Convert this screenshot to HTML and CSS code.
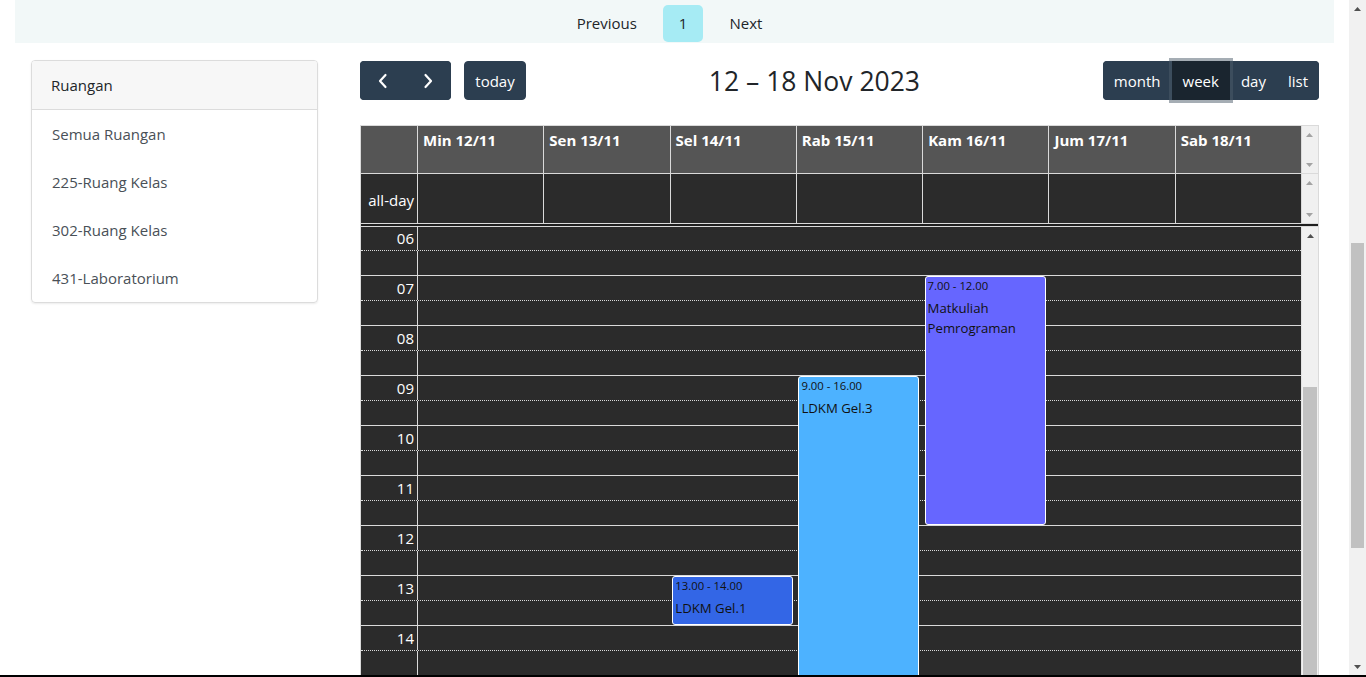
FILE: index.html
```html
<!DOCTYPE html>
<html lang="id">
<head>
<meta charset="utf-8">
<title>Jadwal Ruangan</title>
<link rel="stylesheet" href="styles.css">
</head>
<body>
<div class="screen">
  <div class="page">
    <div class="pager-bar">
      <nav class="pager">
        <a class="pg-link">Previous</a>
        <a class="pg-link active">1</a>
        <a class="pg-link">Next</a>
      </nav>
    </div>

    <div class="content">
      <aside class="side">
        <div class="card">
          <div class="card-head">Ruangan</div>
          <div class="list">
            <a class="item">Semua Ruangan</a>
            <a class="item">225-Ruang Kelas</a>
            <a class="item">302-Ruang Kelas</a>
            <a class="item">431-Laboratorium</a>
          </div>
        </div>
      </aside>

      <section class="cal-wrap">
        <div class="toolbar">
          <div class="tb-chunk">
            <div class="btn-group">
              <button class="btn btn-icon" aria-label="prev">
                <svg width="12" height="16" viewBox="0 0 12 16"><polyline points="8.5,2 3,8 8.5,14" fill="none" stroke="#fff" stroke-width="2.2" stroke-linecap="round" stroke-linejoin="round"/></svg>
              </button>
              <button class="btn btn-icon" aria-label="next">
                <svg width="12" height="16" viewBox="0 0 12 16"><polyline points="3.5,2 9,8 3.5,14" fill="none" stroke="#fff" stroke-width="2.2" stroke-linecap="round" stroke-linejoin="round"/></svg>
              </button>
            </div>
            <button class="btn btn-today">today</button>
          </div>
          <h2 class="tb-title">12 – 18 Nov 2023</h2>
          <div class="btn-group">
            <button class="btn">month</button>
            <button class="btn active">week</button>
            <button class="btn">day</button>
            <button class="btn">list</button>
          </div>
        </div>

        <div class="cal">
          <div class="row-head">
            <div class="hc hc-axis"></div>
            <div class="hc">Min 12/11</div>
            <div class="hc">Sen 13/11</div>
            <div class="hc">Sel 14/11</div>
            <div class="hc">Rab 15/11</div>
            <div class="hc">Kam 16/11</div>
            <div class="hc">Jum 17/11</div>
            <div class="hc">Sab 18/11</div>
            <div class="sb-cell">
              <span class="arr"><svg width="7" height="4" viewBox="0 0 7 4"><polygon points="0,4 3.5,0 7,4" fill="#a3a3a3"/></svg></span>
              <span class="arr"><svg width="7" height="4" viewBox="0 0 7 4"><polygon points="0,0 7,0 3.5,4" fill="#a3a3a3"/></svg></span>
            </div>
          </div>

          <div class="row-allday">
            <div class="ad-axis">all-day</div>
            <div class="ad"></div>
            <div class="ad"></div>
            <div class="ad"></div>
            <div class="ad"></div>
            <div class="ad"></div>
            <div class="ad"></div>
            <div class="ad"></div>
            <div class="sb-cell">
              <span class="arr"><svg width="7" height="4" viewBox="0 0 7 4"><polygon points="0,4 3.5,0 7,4" fill="#a3a3a3"/></svg></span>
              <span class="arr"><svg width="7" height="4" viewBox="0 0 7 4"><polygon points="0,0 7,0 3.5,4" fill="#a3a3a3"/></svg></span>
            </div>
          </div>

          <div class="divider"></div>

          <div class="tg">
            <div class="tg-main">
              <div class="slots">
                <div class="slot hour"><div class="slot-label">06</div><div></div></div>
                <div class="slot half"><div class="slot-label"></div><div></div></div>
                <div class="slot hour"><div class="slot-label">07</div><div></div></div>
                <div class="slot half"><div class="slot-label"></div><div></div></div>
                <div class="slot hour"><div class="slot-label">08</div><div></div></div>
                <div class="slot half"><div class="slot-label"></div><div></div></div>
                <div class="slot hour"><div class="slot-label">09</div><div></div></div>
                <div class="slot half"><div class="slot-label"></div><div></div></div>
                <div class="slot hour"><div class="slot-label">10</div><div></div></div>
                <div class="slot half"><div class="slot-label"></div><div></div></div>
                <div class="slot hour"><div class="slot-label">11</div><div></div></div>
                <div class="slot half"><div class="slot-label"></div><div></div></div>
                <div class="slot hour"><div class="slot-label">12</div><div></div></div>
                <div class="slot half"><div class="slot-label"></div><div></div></div>
                <div class="slot hour"><div class="slot-label">13</div><div></div></div>
                <div class="slot half"><div class="slot-label"></div><div></div></div>
                <div class="slot hour"><div class="slot-label">14</div><div></div></div>
                <div class="slot half"><div class="slot-label"></div><div></div></div>
              </div>
              <div class="tg-cols">
                <div></div>
                <div class="tg-col"></div>
                <div class="tg-col"></div>
                <div class="tg-col">
                  <div class="ev ev-c" style="top:349px;height:49px">
                    <div class="ev-time">13.00 - 14.00</div>
                    <div class="ev-title">LDKM Gel.1</div>
                  </div>
                </div>
                <div class="tg-col">
                  <div class="ev ev-b" style="top:149px;height:349px">
                    <div class="ev-time">9.00 - 16.00</div>
                    <div class="ev-title">LDKM Gel.3</div>
                  </div>
                </div>
                <div class="tg-col">
                  <div class="ev ev-a" style="top:49px;height:249px">
                    <div class="ev-time">7.00 - 12.00</div>
                    <div class="ev-title">Matkuliah Pemrograman</div>
                  </div>
                </div>
                <div class="tg-col"></div>
                <div class="tg-col"></div>
              </div>
            </div>
            <div class="tg-scroll">
              <span class="arr"><svg width="7" height="4" viewBox="0 0 7 4"><polygon points="0,4 3.5,0 7,4" fill="#505050"/></svg></span>
              <div class="tg-thumb"></div>
            </div>
          </div>
        </div>
      </section>
    </div>
  </div>

  <div class="vscroll">
    <span class="arr"><svg width="7" height="4" viewBox="0 0 7 4"><polygon points="0,4 3.5,0 7,4" fill="#505050"/></svg></span>
    <div class="vtrack"><div class="vthumb"></div></div>
    <span class="arr"><svg width="7" height="4" viewBox="0 0 7 4"><polygon points="0,0 7,0 3.5,4" fill="#505050"/></svg></span>
  </div>
</div>
<div class="bottom-line"></div>
</body>
</html>
```

FILE: styles.css
```css
* { box-sizing: border-box; }

html, body {
  margin: 0;
  padding: 0;
}

body {
  width: 1366px;
  height: 677px;
  overflow: hidden;
  background: #fff;
  color: #212529;
  font-family: "Open Sans", "Noto Sans", "Liberation Sans", sans-serif;
  font-size: 15px;
  line-height: 24px;
}

.screen {
  display: flex;
  height: 675px;
}

.page {
  width: 1349px;
  height: 675px;
  overflow: hidden;
}

.bottom-line {
  height: 2px;
  background: #000;
}

/* pagination strip */
.pager-bar {
  margin: 0 15px;
  height: 43px;
  background: #f2f8f8;
  display: flex;
  justify-content: center;
  align-items: flex-start;
  padding: 5px 10px 0 0;
}

.pager {
  display: flex;
  gap: 13px;
}

.pg-link {
  display: block;
  padding: 6px 13px;
  line-height: 25px;
  border-radius: 5px;
  color: #212529;
}

.pg-link.active {
  padding: 6px 16px;
  background: #a6ebf4;
}

/* layout */
.content {
  display: flex;
  align-items: flex-start;
  gap: 42px;
  padding: 17px 0 0 31px;
}

/* sidebar card */
.card {
  width: 287px;
  border: 1px solid #dcdcdc;
  border-radius: 4px;
  box-shadow: 0 1px 2px rgba(0, 0, 0, 0.08);
  overflow: hidden;
}

.card-head {
  height: 49px;
  padding: 12px 19px;
  background: #f7f7f7;
  border-bottom: 1px solid #dcdcdc;
  color: #212529;
}

.list {
  display: flex;
  flex-direction: column;
}

.item {
  display: block;
  height: 48px;
  padding: 12px 20px;
  color: #495057;
}

/* calendar */
.cal-wrap {
  width: 959px;
  padding-top: 1px;
}

.toolbar {
  display: flex;
  justify-content: space-between;
  align-items: center;
  height: 39px;
  margin-bottom: 25px;
}

.tb-chunk {
  display: flex;
  align-items: center;
  gap: 13px;
}

.btn-group {
  display: flex;
  background: #2c3e50;
  border-radius: 4px;
}

.btn {
  display: flex;
  align-items: center;
  justify-content: center;
  height: 39px;
  padding: 0 10px;
  border: 1px solid #2c3e50;
  background: #2c3e50;
  color: #fff;
  font-family: inherit;
  font-size: 15px;
  line-height: 24px;
  border-radius: 4px;
}

.btn-group .btn {
  border-radius: 0;
}

.btn-group .btn:first-child {
  border-radius: 4px 0 0 4px;
}

.btn-group .btn:last-child {
  border-radius: 0 4px 4px 0;
}

.btn-icon {
  width: 45.5px;
  padding: 0;
}

.btn-today {
  width: 62px;
  padding: 0;
}

.btn.active {
  background: #1a252f;
  border-color: #1a252f;
  box-shadow: 0 0 0 3px rgba(76, 91, 106, 0.5);
  position: relative;
  z-index: 1;
}

.tb-title {
  margin: 0;
  font-size: 26.5px;
  font-weight: 500;
  line-height: 34px;
  color: #212529;
}

.cal {
  border: 1px solid #dadada;
  background: #2b2b2b;
}

.row-head,
.row-allday {
  display: grid;
  grid-template-columns: 56px repeat(7, 1fr) 17px;
  border-bottom: 1px solid #dadada;
}

.row-head {
  height: 48px;
  background: #555;
}

.row-allday {
  height: 50px;
  background: #2b2b2b;
}

.hc {
  border-left: 1px solid #dadada;
  padding: 2px 5px;
  color: #fff;
  font-weight: 700;
  white-space: nowrap;
}

.hc-axis {
  border-left: none;
}

.ad {
  border-left: 1px solid #dadada;
}

.ad-axis {
  display: flex;
  align-items: center;
  justify-content: flex-end;
  padding: 3px 3px 0 0;
  color: #fff;
}

.sb-cell {
  display: flex;
  flex-direction: column;
  justify-content: space-between;
  border-left: 1px solid #dadada;
  background: #f0f0f0;
}

.arr {
  display: flex;
  align-items: center;
  justify-content: center;
  height: 17px;
  flex: none;
}

.arr svg {
  display: block;
}

.divider {
  height: 3px;
  background: #1f1f1f;
  border-bottom: 1px solid #dadada;
}

.tg {
  display: flex;
  height: 449px;
}

.tg-main {
  flex: 1;
  position: relative;
  overflow: hidden;
}

.slot {
  display: grid;
  grid-template-columns: 57px 1fr;
  height: 25px;
}

.slot:first-child {
  height: 24px;
}

.slot.hour {
  border-bottom: 1px dotted #dadada;
}

.slot.half {
  border-bottom: 1px solid #dadada;
}

.slot-label {
  border-right: 1px solid #dadada;
  padding-right: 3px;
  text-align: right;
  color: #fff;
  line-height: 24px;
}

.slot:first-child .slot-label {
  line-height: 23px;
}

.tg-cols {
  position: absolute;
  inset: 0;
  display: grid;
  grid-template-columns: 57px repeat(7, 1fr);
}

.tg-col {
  position: relative;
}

.ev {
  position: absolute;
  left: 2px;
  right: 2.5%;
  border: 1px solid #fff;
  border-radius: 3px;
  padding: 1px 2px;
  color: #111;
  overflow: hidden;
}

.ev-a { background: #6666ff; }
.ev-b { background: #4db2ff; }
.ev-c { background: #3366e6; }

.ev-time {
  font-size: 11.3px;
  line-height: 16px;
  white-space: nowrap;
}

.ev-title {
  margin-top: 4px;
  font-size: 13.2px;
  line-height: 20px;
}

.tg-scroll {
  width: 17px;
  display: flex;
  flex-direction: column;
  border-left: 1px solid #e2e2e2;
  background: #f0f0f0;
  overflow: hidden;
}

.tg-thumb {
  margin: 143px 1px 0 1px;
  height: 360px;
  flex: none;
  background: #c1c1c1;
}

/* page scrollbar */
.vscroll {
  width: 17px;
  height: 675px;
  display: flex;
  flex-direction: column;
  background: #f1f1f1;
}

.vtrack {
  flex: 1;
  padding: 226px 2px 0 2px;
}

.vthumb {
  height: 305px;
  background: #c1c1c1;
}
```
